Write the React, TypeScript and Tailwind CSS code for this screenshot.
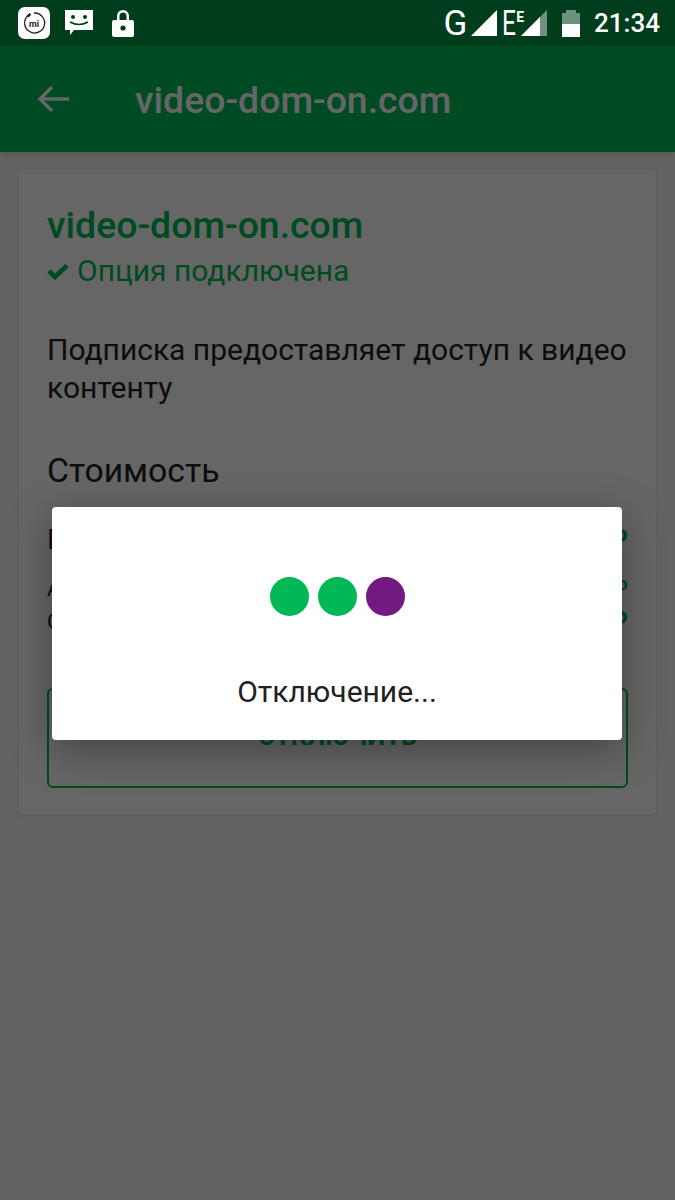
const rows = [
  { label: "Подключение", value: "0 ₽", labelClass: "text-[28px]", valueClass: "text-[28px]", top: "mt-[33px]" },
  { label: "Абонентская плата", value: "0 ₽", labelClass: "text-[21px]", valueClass: "text-[22px]", top: "mt-[17px]" },
  { label: "Стоимость в день", value: "0 ₽", labelClass: "text-[22px]", valueClass: "text-[28px]", top: "mt-[1px]" },
];

const StatusBar = () => (
  <div className="relative z-10 flex h-[46px] items-center bg-[#003d1c] pl-[18px] pr-[15px] text-white">
    <div className="flex h-[32px] w-[32px] items-center justify-center rounded-[7px] bg-white">
      <svg width="26" height="26" viewBox="0 0 26 26" fill="none">
        <path d="M7 5.5 A10 10 0 1 0 13 3" stroke="#222" strokeWidth="1.3" />
        <path d="M6.5 6.5 L9.5 3.8" stroke="#222" strokeWidth="2.4" />
        <text x="13" y="16.5" textAnchor="middle" fontSize="9" fontWeight="700" fill="#222" fontFamily="Roboto, sans-serif">mi</text>
      </svg>
    </div>
    <svg className="ml-[15px]" width="28" height="26" viewBox="0 0 28 26" fill="white">
      <path d="M0 0 H28 V20 H9 L5 25 V20 H0 Z" />
      <circle cx="8" cy="7" r="2" fill="#003d1c" />
      <circle cx="20" cy="7" r="2" fill="#003d1c" />
      <path d="M5 12 Q14 17 23 12" stroke="#003d1c" strokeWidth="1.6" fill="none" />
    </svg>
    <svg className="ml-[19px]" width="22" height="28" viewBox="0 0 22 28" fill="white">
      <path fillRule="evenodd" d="M2 11 H5 V7 A6 6 0 0 1 17 7 V11 H20 Q22 11 22 13 V26 Q22 28 20 28 H2 Q0 28 0 26 V13 Q0 11 2 11 Z M7.5 11 H14.5 V7 A3.5 3.5 0 0 0 7.5 7 Z" />
      <circle cx="11" cy="19" r="2.6" fill="#003d1c" />
    </svg>
    <div className="ml-auto flex items-center">
      <span className="text-[35px] leading-none font-[Roboto]">G</span>
      <svg className="ml-[4px]" width="26" height="26" viewBox="0 0 26 26" fill="white">
        <path d="M26 0 V26 H0 Z" />
      </svg>
      <span className="ml-[5px] mr-[-6px] inline-block origin-left scale-x-[0.7] text-[35px] leading-none font-[Roboto]">E</span>
      <span className="mb-[12px] text-[14px] leading-none font-bold font-[Roboto]">E</span>
      <svg className="ml-[-3px]" width="26" height="26" viewBox="0 0 26 26">
        <path d="M26 0 V26 H0 Z" fill="#6f9180" />
        <path d="M19 7 V26 H0 Z" fill="white" />
      </svg>
      <div className="ml-[15px] flex flex-col items-center">
        <div className="h-[3px] w-[10px] bg-[#6f9180]" />
        <div className="h-[11px] w-[18px] bg-[#6f9180]" />
        <div className="h-[13px] w-[18px] bg-white" />
      </div>
      <span className="ml-[14px] text-[26px] leading-none font-medium font-[Roboto]">21:34</span>
    </div>
  </div>
);

const AppBar = () => (
  <div className="flex h-[106px] items-center bg-[#00bc58] pl-[37px] text-white shadow-md">
    <svg width="32" height="28" viewBox="0 0 32 28" fill="none" stroke="white" strokeWidth="3.4">
      <path d="M32 14 H3" />
      <path d="M15 2 L3 14 L15 26" />
    </svg>
    <span className="ml-[66px] pt-[4px] text-[37.4px] leading-none font-medium">video-dom-on.com</span>
  </div>
);

const Card = () => (
  <div className="mx-[19px] mt-[18px] h-[645px] rounded-[4px] bg-white px-[28px] pt-[34px] shadow-sm">
    <div className="text-[37.4px] leading-[42px] font-medium text-[#00b956]">video-dom-on.com</div>
    <div className="mt-[5px] flex items-center text-[30px] leading-[40px] text-[#00b956]">
      <svg width="22" height="17" viewBox="0 0 22 17" fill="none" stroke="currentColor" strokeWidth="4.6">
        <path d="M2 8 L8 14 L20 2.5" />
      </svg>
      <span className="ml-[8px]">Опция подключена</span>
    </div>
    <p className="mt-[40px] w-[590px] text-[30px] leading-[38px] text-[#212121]">
      Подписка предоставляет доступ к видео контенту
    </p>
    <div className="mt-[44px] text-[33.7px] leading-[40px] text-[#212121]">Стоимость</div>
    {rows.map((row) => (
      <div key={row.label} className={`flex items-center justify-between ${row.top}`}>
        <span className={`${row.labelClass} leading-[32px] text-[#212121]`}>{row.label}</span>
        <span className={`${row.valueClass} leading-[32px] font-medium text-[#00b956]`}>{row.value}</span>
      </div>
    ))}
    <button className="mt-[50px] flex h-[100px] w-[581px] items-center justify-center rounded-[6px] border-2 border-[#00b956] pb-[3px] text-[25.6px] leading-none font-bold text-[#00b956]">
      ОТКЛЮЧИТЬ
    </button>
  </div>
);

export default function App() {
  return (
    <div className="relative h-[1200px] w-[675px] overflow-hidden bg-[#f7f7f7] font-[Roboto,sans-serif]">
      <StatusBar />
      <AppBar />
      <Card />
      <div className="absolute inset-0 bg-black/60 pl-[52px] pt-[507px]">
        <div className="flex h-[233px] w-[570px] flex-col items-center rounded-[4px] bg-white pt-[70px] shadow-[0_10px_40px_rgba(0,0,0,0.35)]">
          <div className="flex gap-[9px]">
            <div className="h-[39px] w-[39px] rounded-full bg-[#00b956]" />
            <div className="h-[39px] w-[39px] rounded-full bg-[#00b956]" />
            <div className="h-[39px] w-[39px] rounded-full bg-[#731982]" />
          </div>
          <div className="mt-[56px] text-[30px] leading-[40px] text-[#212121]">Отключение...</div>
        </div>
      </div>
    </div>
  );
}
